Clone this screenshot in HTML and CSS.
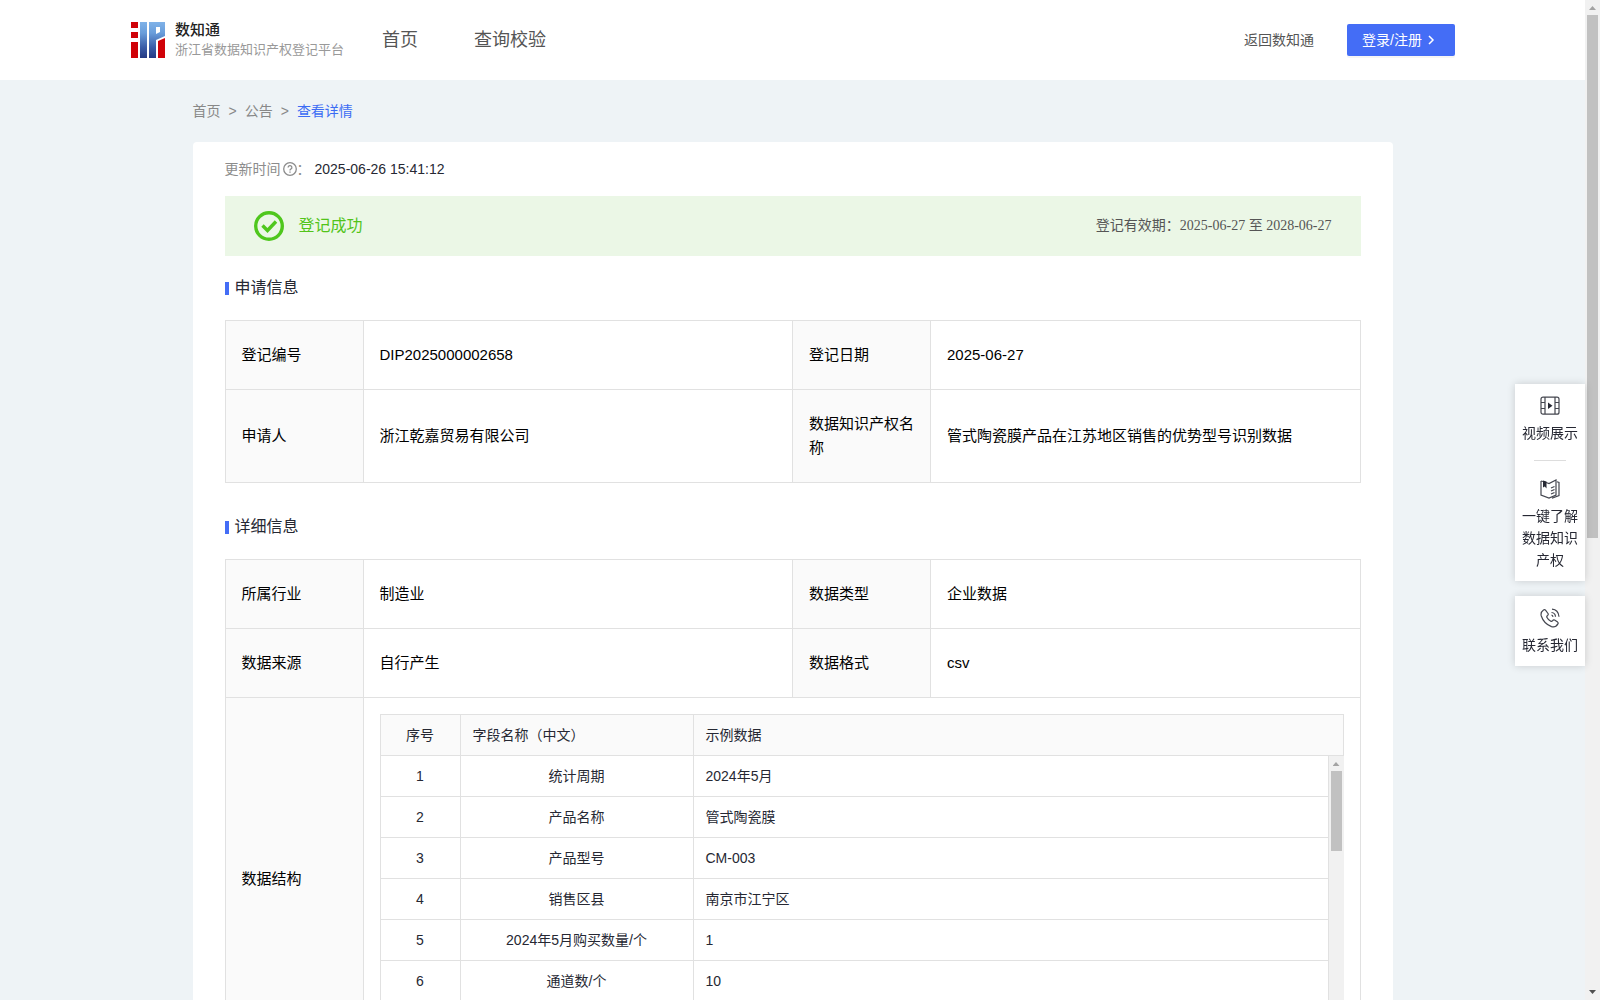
FILE: index.html
```html
<!DOCTYPE html>
<html lang="zh-CN">
	<head>
		<meta charset="UTF-8">
		<title>浙江省数据知识产权登记平台</title>
		<link rel="stylesheet" href="styles.css">
	</head>
	<body>
		<div class="page">
			<header class="header">
				<a class="brand" href="#">
					<svg class="logo" viewBox="0 0 34 36">
						<defs>
							<linearGradient id="logoBlue" gradientUnits="userSpaceOnUse" x1="0" y1="0" x2="0" y2="36">
								<stop offset="0" stop-color="#7fb2e8"/>
								<stop offset="0.3" stop-color="#6a9edb"/>
								<stop offset="0.7" stop-color="#3a5da8"/>
								<stop offset="1" stop-color="#253a84"/>
							</linearGradient>
						</defs>
						<path fill="#d00208" d="M0 0h7v6H0zM0 10h7v6H0zM0 20h7v16H0zM27 19l7-3v20h-7z"/>
						<path fill="url(#logoBlue)" d="M9 0h7v36H9zM18 0h16v14l-9 4v18h-7zM25 5v7l4-2V5z" fill-rule="evenodd"/>
					</svg>
					<span class="brand-text">
						<strong>数知通</strong>
						<span>浙江省数据知识产权登记平台</span>
					</span>
				</a>
				<nav class="nav">
					<a href="#">首页</a>
					<a href="#">查询校验</a>
				</nav>
				<a class="back" href="#">返回数知通</a>
				<button class="login" type="button">登录/注册
					<svg viewBox="0 0 10 10"><path d="M3 1l4 4-4 4"/></svg>
				</button>
			</header>

			<main class="main">
				<div class="crumbs">
					<a href="#">首页</a><span>&gt;</span><a href="#">公告</a><span>&gt;</span><a class="current" href="#">查看详情</a>
				</div>

				<div class="card">
					<div class="update">
						<span>更新时间</span>
						<svg viewBox="0 0 14 14"><circle cx="7" cy="7" r="6.3"/><path d="M5.1 5.5a1.9 1.9 0 1 1 2.7 1.7q-.8.4-.8 1.2M7 9.6v1.2"/></svg>
						<span class="colon">：</span>
						<time>2025-06-26 15:41:12</time>
					</div>

					<div class="result">
						<svg viewBox="0 0 30 30"><circle cx="15" cy="15" r="13.3"/><path d="M8.5 14.5l5 5 8.5-9"/></svg>
						<span class="status">登记成功</span>
						<span class="period">登记有效期：2025-06-27 至 2028-06-27</span>
					</div>

					<h2 class="title">申请信息</h2>
					<table class="info">
						<colgroup><col class="c-label"><col><col class="c-label"><col></colgroup>
						<tr>
							<th>登记编号</th><td>DIP2025000002658</td>
							<th>登记日期</th><td>2025-06-27</td>
						</tr>
						<tr>
							<th>申请人</th><td>浙江乾嘉贸易有限公司</td>
							<th>数据知识产权名称</th><td>管式陶瓷膜产品在江苏地区销售的优势型号识别数据</td>
						</tr>
					</table>

					<h2 class="title">详细信息</h2>
					<table class="info">
						<colgroup><col class="c-label"><col><col class="c-label"><col></colgroup>
						<tr>
							<th>所属行业</th><td>制造业</td>
							<th>数据类型</th><td>企业数据</td>
						</tr>
						<tr>
							<th>数据来源</th><td>自行产生</td>
							<th>数据格式</th><td>csv</td>
						</tr>
						<tr>
							<th>数据结构</th>
							<td class="nested" colspan="3">
								<div class="fields">
									<table class="grid grid-head">
										<colgroup><col class="c-no"><col class="c-name"><col></colgroup>
										<tr><th class="center">序号</th><th>字段名称（中文）</th><th>示例数据</th></tr>
									</table>
									<div class="grid-body">
										<div class="grid-rows">
											<table class="grid">
												<colgroup><col class="c-no"><col class="c-name"><col></colgroup>
												<tr><td>1</td><td>统计周期</td><td>2024年5月</td></tr>
												<tr><td>2</td><td>产品名称</td><td>管式陶瓷膜</td></tr>
												<tr><td>3</td><td>产品型号</td><td>CM-003</td></tr>
												<tr><td>4</td><td>销售区县</td><td>南京市江宁区</td></tr>
												<tr><td>5</td><td>2024年5月购买数量/个</td><td>1</td></tr>
												<tr><td>6</td><td>通道数/个</td><td>10</td></tr>
											</table>
										</div>
										<div class="bar"><i class="up"></i><i class="thumb thumb-grid"></i></div>
									</div>
								</div>
							</td>
						</tr>
					</table>
				</div>
			</main>

			<aside class="side">
				<div class="side-box">
					<a href="#">
						<svg viewBox="0 0 20 20"><rect x="1" y="1.2" width="18" height="17" rx="2"/><path d="M5 1v17M15 1v17M1 6.5h4M1 12.5h4M15 6.5h4M15 12.5h4"/><path class="solid" d="M8 6.5l4.5 3.2L8 13z"/></svg>
						视频展示
					</a>
					<hr>
					<a href="#">
						<svg viewBox="0 0 20 20"><path d="M1 2v14l8 3 7-3V1L9 4.500 6 3.500M1 2l2 .5M17 2.800l2 .7v13L12 19.300M11 9l3.500-1.500M11 12l3.500-1.500M11 15l3.500-1.500"/><path class="solid" d="M3 1.500l3.500 1v7L4.800 7.500 3 8.500z"/></svg>
						一键了解数据知识产权
					</a>
				</div>
				<div class="side-box">
					<a href="#">
						<svg viewBox="0 0 20 20"><path d="M5.500 2.200L8 5.500Q8.700 6.600 7.600 7.500 6.300 8.400 7 9.500 8.300 12 10.800 13.300q1 .5 1.800-.6.900-1.300 2-.6l3 2q1 .8.300 1.800-2.300 4-6.400 2.700Q3.800 15.700 1.300 8 .2 4.300 3.500 2q1.200-.8 2 .2zM11.500 4.500q3.800.3 4 4.300M12 1.200q6.300.5 7 7.500M11.500 7.200q1.300.2 1.500 1.600"/></svg>
						联系我们
					</a>
				</div>
			</aside>
		</div>

		<div class="bar bar-page"><i class="up"></i><i class="thumb thumb-page"></i><i class="down"></i></div>
	</body>
</html>
```

FILE: styles.css
```css
*{
	box-sizing:border-box;
}
body{
	margin:0;
	display:flex;
	height:100vh;
	overflow:hidden;
	font-family:"Liberation Sans","Noto Sans CJK SC",sans-serif;
	font-size:14px;
	line-height:22px;
	color:#262833;
}
a{
	color:inherit;
	text-decoration:none;
}
svg{
	fill:none;
	stroke:currentColor;
}
.page{
	flex:1;
	min-width:0;
	overflow:hidden;
	background:#eef3f6;
}

/* header */
.header{
	height:80px;
	padding:0 130px 0 131px;
	display:flex;
	align-items:center;
	background:#fff;
	color:#555;
}
.brand{
	display:flex;
	align-items:center;
	gap:10px;
}
.logo{
	width:34px;
	height:36px;
	stroke:none;
}
.brand-text{
	display:flex;
	flex-direction:column;
	font-size:13px;
	line-height:20px;
	color:#999;
}
.brand-text strong{
	font-size:15px;
	font-weight:500;
	color:#222;
}
.nav{
	display:flex;
	gap:56px;
	margin-left:38px;
	font-size:18px;
}
.back{
	margin-left:auto;
}
.login{
	display:flex;
	align-items:center;
	gap:4px;
	width:108px;
	height:32px;
	margin-left:33px;
	padding:0 15px;
	border:0;
	border-radius:2px;
	background:#446df6;
	box-shadow:0 2px 0 rgba(0,0,0,.04);
	color:#fff;
	font:inherit;
}
.login svg{
	width:10px;
	height:10px;
	stroke-width:1.5;
}

/* content */
.main{
	max-width:1200px;
	margin:0 auto;
}
.crumbs{
	padding:20px 0;
	color:#888;
}
.crumbs span{
	margin:0 8px;
}
.crumbs .current{
	color:#3c6cf4;
}
.card{
	padding:16px 32px 32px;
	border-radius:4px;
	background:#fff;
}
.update{
	display:flex;
	align-items:center;
	color:#8c8c8c;
}
.update svg{
	width:14px;
	height:14px;
	margin-left:2px;
	stroke-width:1.3;
}
.update .colon{
	width:18px;
}
.update time{
	color:#262833;
}
.result{
	display:flex;
	align-items:center;
	height:60px;
	margin-top:16px;
	padding:0 29px;
	background:#ebf7e6;
	color:#52c41a;
}
.result svg{
	width:30px;
	height:30px;
	stroke:#4fc71d;
	stroke-width:3.4;
}
.status{
	margin-left:15px;
	font-size:16px;
}
.period{
	margin-left:auto;
	font-family:"Liberation Serif","Noto Sans CJK SC",serif;
	color:#555;
}
.title{
	display:flex;
	align-items:center;
	gap:6px;
	margin:20px 0;
	font-size:16px;
	font-weight:400;
	line-height:24px;
}
.title::before{
	content:"";
	width:4px;
	height:13px;
	background:#446df6;
}

/* info tables */
table{
	width:100%;
	border-collapse:collapse;
	table-layout:fixed;
}
.info{
	margin-bottom:32px;
	font-size:15px;
	line-height:24px;
	color:#000;
}
.c-label{
	width:138px;
}
th,
td{
	border:1px solid #e1e1e1;
	font-weight:400;
	text-align:left;
}
th{
	background:#fafafa;
}
.info th,
.info td{
	padding:22px 16px;
}
.info .nested{
	padding:16px;
}

/* field list */
.fields{
	height:329px;
	overflow:hidden;
}
.c-no{
	width:80px;
}
.c-name{
	width:233px;
}
.info .grid{
	font-size:14px;
	line-height:22px;
	color:#262833;
}
.info .grid th,
.info .grid td{
	padding:9px 12px;
}
.info .grid .center,
.grid td:nth-child(-n+2){
	text-align:center;
}
.grid-body{
	display:flex;
	height:288px;
	overflow:hidden;
}
.grid-rows{
	flex:1;
	min-width:0;
}
.grid-body tr:first-child td{
	border-top:0;
}

/* scroll bars */
.bar{
	display:flex;
	flex-direction:column;
	flex:none;
	align-items:center;
	width:15px;
	background:#f1f1f1;
}
.up,
.down{
	width:7px;
	height:4px;
	background:#a3a3a3;
	clip-path:polygon(50% 0,100% 100%,0 100%);
}
.up{
	margin:6px 0 5px;
}
.down{
	margin:auto 0 6px;
	background:#505050;
	clip-path:polygon(0 0,100% 0,50% 100%);
}
.thumb{
	width:11px;
	background:#c1c1c1;
}
.thumb-grid{
	height:80px;
}
.thumb-page{
	height:523px;
}

/* floating shortcuts */
.side{
	position:fixed;
	top:384px;
	right:15px;
	width:70px;
}
.side-box{
	margin-bottom:15px;
	padding:12px 7px 10px;
	background:#fff;
	box-shadow:0 0 8px rgba(0,0,0,.16);
	text-align:center;
}
.side-box a{
	display:block;
}
.side-box svg{
	display:block;
	width:20px;
	height:20px;
	margin:0 auto 6px;
	stroke:#44464f;
	stroke-width:1.2;
}
.side-box .solid{
	fill:#262833;
	stroke:none;
}
.side-box hr{
	width:32px;
	margin:16px auto 18px;
	border:0;
	border-top:1px solid #ddd;
}
```
